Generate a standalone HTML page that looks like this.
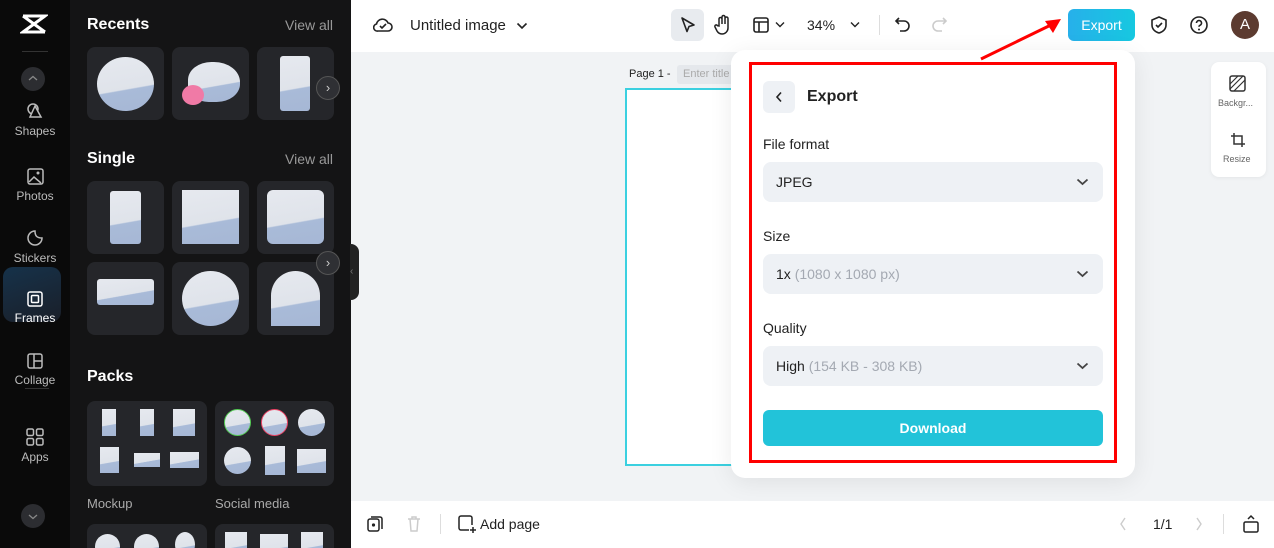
<!DOCTYPE html>
<html style="width:1274px;height:548px;overflow:hidden"><head><meta charset="utf-8"><style>
*{box-sizing:border-box;margin:0;padding:0}
body{width:1274px;height:548px;overflow:hidden;font-family:"Liberation Sans",sans-serif;background:#f1f3f5;position:relative}
.a{position:absolute}
.rail{left:0;top:0;width:70px;height:548px;background:#0a0a0a}
.panel{left:70px;top:0;width:281px;height:548px;background:#141415}
.ri{position:absolute;left:0;width:70px;text-align:center;color:#bbb;font-size:12px}
.ri svg{display:block;margin:0 auto 4px}
.h{position:absolute;color:#fff;font-weight:bold;font-size:16px}
.va{position:absolute;color:#999;font-size:14px;right:16px}
.card{position:absolute;background:#25262a;border-radius:8px}
.img{position:absolute;background:linear-gradient(170deg,#e6e9ef 0%,#dfe3ea 58%,#a9bbd8 60%,#a6b7d5 100%)}
.nav{position:absolute;width:24px;height:24px;border-radius:50%;background:#2f3034;border:1px solid #555;color:#ccc;font-size:13px;text-align:center;line-height:22px}
.top{left:351px;top:0;width:923px;height:52px;background:#fff}
.bot{left:351px;top:501px;width:923px;height:47px;background:#fff}
.sel{position:absolute;left:763px;width:340px;height:40px;border-radius:8px;background:#eef1f5;font-size:14px;color:#222;padding:0 13px;line-height:40px}
.sel svg{position:absolute;right:14px;top:16px}
.lbl{position:absolute;left:763px;font-size:14px;color:#222}
.g{color:#a4a9b2}
</style></head><body>
<div class="a rail"></div>
<svg class="a" style="left:20px;top:13px" width="28" height="22" viewBox="0 0 28 22"><path d="M3 3h22L3 19h22M3 3l22 16M25 3L3 19" stroke="#fff" stroke-width="3" fill="none"/></svg>
<div class="a" style="left:22px;top:51px;width:26px;height:1px;background:#333"></div>
<div class="a" style="left:21px;top:67px;width:24px;height:24px;border-radius:50%;background:#2c2d31"></div>
<svg class="a" style="left:28px;top:75px" width="10" height="7"><path d="M1 5l4-3.5L9 5" fill="none" stroke="#888" stroke-width="1.3"/></svg>
<div class="ri" style="top:102px"><svg width="18" height="18" viewBox="0 0 18 18"><circle cx="7" cy="7" r="5" fill="none" stroke="#bbb" stroke-width="1.5"/><path d="M9 4l6 11H4z" fill="#0a0a0a" stroke="#bbb" stroke-width="1.5"/></svg>Shapes</div>
<div class="ri" style="top:168px"><svg width="17" height="17"><rect x="1" y="1" width="15" height="15" rx="2" fill="none" stroke="#bbb" stroke-width="1.5"/><path d="M2 14l5-5 7 6" stroke="#bbb" fill="none" stroke-width="1.5"/><circle cx="11" cy="5" r="1.5" fill="#bbb"/></svg>Photos</div>
<div class="ri" style="top:229px"><svg width="18" height="18"><path d="M16 9A7 7 0 1 1 9 2c0 5 2 7 7 7z" fill="none" stroke="#bbb" stroke-width="1.5"/></svg>Stickers</div>
<div class="a" style="left:3px;top:267px;width:58px;height:55px;border-radius:10px;background:linear-gradient(160deg,#16324a,#1a1f29)"></div>
<div class="ri" style="top:291px;color:#fff"><svg width="16" height="16"><rect x="1" y="1" width="14" height="14" rx="2" fill="none" stroke="#fff" stroke-width="1.5"/><rect x="4.5" y="4.5" width="7" height="7" rx="1" fill="none" stroke="#fff" stroke-width="1.5"/></svg>Frames</div>
<div class="ri" style="top:353px"><svg width="16" height="16"><rect x="1" y="1" width="14" height="14" rx="2" fill="none" stroke="#bbb" stroke-width="1.5"/><path d="M7 1v14M7 8h8" stroke="#bbb" stroke-width="1.5"/></svg>Collage</div>
<div class="a" style="left:25px;top:388px;width:24px;height:1px;background:#333"></div>
<div class="ri" style="top:428px"><svg width="18" height="18"><g fill="none" stroke="#bbb" stroke-width="1.5"><rect x="1" y="1" width="6.5" height="6.5" rx="1.5"/><rect x="10.5" y="1" width="6.5" height="6.5" rx="1.5"/><rect x="1" y="10.5" width="6.5" height="6.5" rx="1.5"/><rect x="10.5" y="10.5" width="6.5" height="6.5" rx="1.5"/></g></svg>Apps</div>
<div class="a" style="left:21px;top:504px;width:24px;height:24px;border-radius:50%;background:#2c2d31"></div>
<svg class="a" style="left:28px;top:513px" width="10" height="7"><path d="M1 2l4 3.5L9 2" fill="none" stroke="#888" stroke-width="1.3"/></svg>

<div class="a panel"></div>
<div class="h" style="left:87px;top:16px">Recents</div><div class="va" style="left:285px;top:17px">View all</div>
<div class="card" style="left:87px;top:47px;width:77px;height:73px"><div class="img" style="left:10px;top:10px;width:57px;height:54px;border-radius:50%"></div></div>
<div class="card" style="left:172px;top:47px;width:77px;height:73px"><div class="img" style="left:16px;top:15px;width:52px;height:40px;border-radius:45% 50% 45% 40%"></div><div class="a" style="left:10px;top:38px;width:22px;height:20px;border-radius:50%;background:#f07aa6"></div></div>
<div class="card" style="left:257px;top:47px;width:77px;height:73px"><div class="img" style="left:23px;top:9px;width:30px;height:55px;border-radius:3px"></div></div>
<div class="nav" style="left:316px;top:76px">›</div>
<div class="h" style="left:87px;top:150px">Single</div><div class="va" style="left:285px;top:151px">View all</div>
<div class="card" style="left:87px;top:181px;width:77px;height:73px"><div class="img" style="left:23px;top:10px;width:31px;height:53px;border-radius:3px"></div></div>
<div class="card" style="left:172px;top:181px;width:77px;height:73px"><div class="img" style="left:10px;top:9px;width:57px;height:54px"></div></div>
<div class="card" style="left:257px;top:181px;width:77px;height:73px"><div class="img" style="left:10px;top:9px;width:57px;height:54px;border-radius:6px"></div></div>
<div class="card" style="left:87px;top:262px;width:77px;height:73px"><div class="img" style="left:10px;top:17px;width:57px;height:26px;border-radius:3px"></div></div>
<div class="card" style="left:172px;top:262px;width:77px;height:73px"><div class="img" style="left:10px;top:9px;width:57px;height:55px;border-radius:50%"></div></div>
<div class="card" style="left:257px;top:262px;width:77px;height:73px"><div class="img" style="left:14px;top:9px;width:49px;height:55px;border-radius:25px 25px 0 0"></div></div>
<div class="nav" style="left:316px;top:251px">›</div>
<div class="h" style="left:87px;top:368px">Packs</div>
<div class="card" style="left:87px;top:401px;width:120px;height:85px">
<div class="img" style="left:15px;top:8px;width:14px;height:27px"></div><div class="img" style="left:53px;top:8px;width:14px;height:27px"></div><div class="img" style="left:86px;top:8px;width:22px;height:27px"></div>
<div class="img" style="left:13px;top:46px;width:19px;height:26px"></div><div class="img" style="left:47px;top:52px;width:26px;height:14px"></div><div class="img" style="left:83px;top:51px;width:29px;height:16px"></div></div>
<div class="card" style="left:215px;top:401px;width:119px;height:85px">
<div class="img" style="left:9px;top:8px;width:27px;height:27px;border-radius:50%;border:1px solid #5c5"></div><div class="img" style="left:46px;top:8px;width:27px;height:27px;border-radius:50%;border:1px solid #e46"></div><div class="img" style="left:83px;top:8px;width:27px;height:27px;border-radius:50%"></div>
<div class="img" style="left:9px;top:46px;width:27px;height:27px;border-radius:50%"></div><div class="img" style="left:50px;top:45px;width:20px;height:29px"></div><div class="img" style="left:82px;top:48px;width:29px;height:24px"></div></div>
<div class="a" style="left:87px;top:496px;color:#aaa;font-size:13px">Mockup</div>
<div class="a" style="left:215px;top:496px;color:#aaa;font-size:13px">Social media</div>
<div class="card" style="left:87px;top:524px;width:120px;height:24px;border-radius:8px 8px 0 0;overflow:hidden"><div class="img" style="left:8px;top:10px;width:25px;height:25px;border-radius:50%"></div><div class="img" style="left:47px;top:10px;width:25px;height:25px;border-radius:50%"></div><div class="img" style="left:88px;top:8px;width:20px;height:25px;border-radius:50%"></div></div>
<div class="card" style="left:215px;top:524px;width:119px;height:24px;border-radius:8px 8px 0 0;overflow:hidden"><div class="img" style="left:10px;top:8px;width:22px;height:25px"></div><div class="img" style="left:45px;top:10px;width:28px;height:25px"></div><div class="img" style="left:86px;top:8px;width:22px;height:25px"></div></div>
<div class="a" style="left:350px;top:244px;width:9px;height:56px;background:#222;border-radius:0 8px 8px 0;color:#777;font-size:10px;line-height:56px">‹</div>

<div class="a top"></div>
<svg class="a" style="left:373px;top:16px" width="20" height="18" viewBox="0 0 20 18"><path d="M5 15h10a4 4 0 0 0 0-8 6 6 0 0 0-11.5 1A3.5 3.5 0 0 0 5 15z" fill="none" stroke="#222" stroke-width="1.6"/><path d="M7 10l2 2 4-4" fill="none" stroke="#222" stroke-width="1.6"/></svg>
<div class="a" style="left:410px;top:17px;font-size:15px;color:#222">Untitled image</div>
<svg class="a" style="left:516px;top:22px" width="12" height="8"><path d="M1.5 1.5L6 6l4.5-4.5" fill="none" stroke="#222" stroke-width="1.6"/></svg>
<div class="a" style="left:671px;top:9px;width:33px;height:32px;background:#e8ebef;border-radius:6px"></div>
<svg class="a" style="left:679px;top:16px" width="18" height="18"><path d="M3 2l12 7-5 1.5-2 5z" fill="none" stroke="#222" stroke-width="1.6" stroke-linejoin="round"/></svg>
<svg class="a" style="left:713px;top:14px" width="20" height="22" viewBox="0 0 20 22"><path d="M6 12V5a1.5 1.5 0 0 1 3 0v5V3a1.5 1.5 0 0 1 3 0v7V4.5a1.5 1.5 0 0 1 3 0V14a6 6 0 0 1-6 6 6 6 0 0 1-5-3l-2-4a1.4 1.4 0 0 1 2.5-1.3z" fill="none" stroke="#222" stroke-width="1.5"/></svg>
<svg class="a" style="left:752px;top:16px" width="18" height="18"><rect x="2" y="2" width="14" height="14" rx="2" fill="none" stroke="#222" stroke-width="1.6"/><path d="M2 6h14M7 6v10" stroke="#222" stroke-width="1.6"/></svg>
<svg class="a" style="left:775px;top:21px" width="10" height="7"><path d="M1 1.5l4 4 4-4" fill="none" stroke="#222" stroke-width="1.4"/></svg>
<div class="a" style="left:807px;top:17px;font-size:14px;color:#222">34%</div>
<svg class="a" style="left:850px;top:21px" width="10" height="7"><path d="M1 1.5l4 4 4-4" fill="none" stroke="#222" stroke-width="1.4"/></svg>
<div class="a" style="left:879px;top:15px;width:1px;height:20px;background:#ddd"></div>
<svg class="a" style="left:894px;top:15px" width="18" height="20"><path d="M5 3L2 6l3 3M2 6h8a5 5 0 0 1 0 10H6" fill="none" stroke="#222" stroke-width="1.6"/></svg>
<svg class="a" style="left:930px;top:15px" width="18" height="20"><path d="M13 3l3 3-3 3M16 6H8a5 5 0 0 0 0 10h4" fill="none" stroke="#ccc" stroke-width="1.6"/></svg>
<div class="a" style="left:1068px;top:9px;width:67px;height:32px;border-radius:6px;background:linear-gradient(90deg,#27b0ea,#16c8e0);color:#fff;font-size:14px;text-align:center;line-height:32px">Export</div>
<svg class="a" style="left:1150px;top:15px" width="18" height="20"><path d="M9 2l7 3v5c0 4-3 7-7 8-4-1-7-4-7-8V5z" fill="none" stroke="#222" stroke-width="1.6"/><path d="M6 10l2 2 4-4" fill="none" stroke="#222" stroke-width="1.6"/></svg>
<svg class="a" style="left:1189px;top:15px" width="20" height="20"><circle cx="10" cy="10" r="8" fill="none" stroke="#222" stroke-width="1.6"/><path d="M7.5 8a2.5 2.5 0 1 1 3.5 2.3c-.7.3-1 .8-1 1.5" fill="none" stroke="#222" stroke-width="1.6"/><circle cx="10" cy="14.5" r="1" fill="#222"/></svg>
<div class="a" style="left:1231px;top:11px;width:28px;height:28px;border-radius:50%;background:#5c3b30;color:#fff;font-size:15px;text-align:center;line-height:28px">A</div>

<div class="a" style="left:629px;top:68px;font-size:11px;color:#222">Page 1 -</div>
<div class="a" style="left:677px;top:65px;width:60px;height:19px;background:#e5e8ec;border-radius:3px;font-size:11px;color:#aaa;padding:3px 6px">Enter title</div>
<div class="a" style="left:625px;top:88px;width:120px;height:378px;background:#fff;border:2px solid #3bd0e0"></div>

<div class="a" style="left:1211px;top:62px;width:55px;height:115px;background:#fff;border-radius:8px;box-shadow:0 1px 4px rgba(0,0,0,.06)"></div>
<svg class="a" style="left:1229px;top:75px" width="17" height="17"><rect x="1" y="1" width="15" height="15" rx="2" fill="none" stroke="#333" stroke-width="1.5"/><path d="M1 9L9 1M5 16L16 5M1 14L14 1" stroke="#333" stroke-width="1.2"/></svg>
<div class="a" style="left:1218px;top:98px;font-size:9px;color:#666">Backgr...</div>
<svg class="a" style="left:1230px;top:132px" width="16" height="16"><path d="M4 1v11h11M1 4h11v11" fill="none" stroke="#333" stroke-width="1.5"/></svg>
<div class="a" style="left:1223px;top:154px;font-size:9px;color:#666">Resize</div>

<div class="a" style="left:731px;top:50px;width:404px;height:428px;background:#fff;border-radius:14px;box-shadow:0 4px 24px rgba(0,0,0,.08)"></div>
<div class="a" style="left:749px;top:62px;width:368px;height:401px;border:3px solid #f00"></div>
<div class="a" style="left:763px;top:81px;width:32px;height:32px;background:#eef1f5;border-radius:6px"></div>
<svg class="a" style="left:775px;top:91px" width="8" height="12"><path d="M6 1.5L2 6l4 4.5" fill="none" stroke="#222" stroke-width="1.6"/></svg>
<div class="a" style="left:807px;top:88px;font-size:16px;font-weight:bold;color:#222">Export</div>
<div class="lbl" style="top:136px">File format</div>
<div class="sel" style="top:162px">JPEG<svg width="13" height="8"><path d="M1.5 1.5L6.5 6l5-4.5" fill="none" stroke="#444" stroke-width="1.8"/></svg></div>
<div class="lbl" style="top:228px">Size</div>
<div class="sel" style="top:254px">1x <span class="g">(1080 x 1080 px)</span><svg width="13" height="8"><path d="M1.5 1.5L6.5 6l5-4.5" fill="none" stroke="#444" stroke-width="1.8"/></svg></div>
<div class="lbl" style="top:320px">Quality</div>
<div class="sel" style="top:346px">High <span class="g">(154 KB - 308 KB)</span><svg width="13" height="8"><path d="M1.5 1.5L6.5 6l5-4.5" fill="none" stroke="#444" stroke-width="1.8"/></svg></div>
<div class="a" style="left:763px;top:410px;width:340px;height:36px;border-radius:6px;background:#22c3d9;color:#fff;font-size:14px;font-weight:bold;text-align:center;line-height:36px">Download</div>

<svg class="a" style="left:975px;top:15px" width="90" height="50"><path d="M6 44L80 8" stroke="#f00" stroke-width="3"/><path d="M86 4L70 6 78 18z" fill="#f00"/></svg>

<div class="a bot"></div>
<svg class="a" style="left:366px;top:515px" width="18" height="18"><rect x="2" y="4" width="11" height="12" rx="2" fill="none" stroke="#222" stroke-width="1.5"/><path d="M5 2h9a2 2 0 0 1 2 2v10" fill="none" stroke="#222" stroke-width="1.5"/><circle cx="7.5" cy="10" r="1.6" fill="#222"/></svg>
<svg class="a" style="left:406px;top:515px" width="16" height="18"><path d="M2 4h12M6 4V2h4v2M4 4l1 12h6l1-12" fill="none" stroke="#ccc" stroke-width="1.5"/></svg>
<div class="a" style="left:440px;top:514px;width:1px;height:20px;background:#ddd"></div>
<svg class="a" style="left:457px;top:514px" width="20" height="20"><path d="M12 16H4a2 2 0 0 1-2-2V4a2 2 0 0 1 2-2h9a2 2 0 0 1 2 2v7" fill="none" stroke="#222" stroke-width="1.5"/><path d="M16 13v6M13 16h6" stroke="#222" stroke-width="1.5"/></svg>
<div class="a" style="left:480px;top:516px;font-size:14px;color:#222">Add page</div>
<svg class="a" style="left:1119px;top:517px" width="8" height="14"><path d="M6 1L2 7l4 6" fill="none" stroke="#ccc" stroke-width="1.4"/></svg>
<div class="a" style="left:1153px;top:516px;font-size:14px;color:#222">1/1</div>
<svg class="a" style="left:1195px;top:517px" width="8" height="14"><path d="M2 1l4 6-4 6" fill="none" stroke="#ccc" stroke-width="1.4"/></svg>
<div class="a" style="left:1223px;top:514px;width:1px;height:20px;background:#ddd"></div>
<svg class="a" style="left:1242px;top:514px" width="18" height="20"><rect x="2" y="8" width="14" height="10" rx="1.5" fill="none" stroke="#222" stroke-width="1.5"/><path d="M6 5l3-3 3 3" fill="none" stroke="#222" stroke-width="1.5"/></svg>
</body></html>
